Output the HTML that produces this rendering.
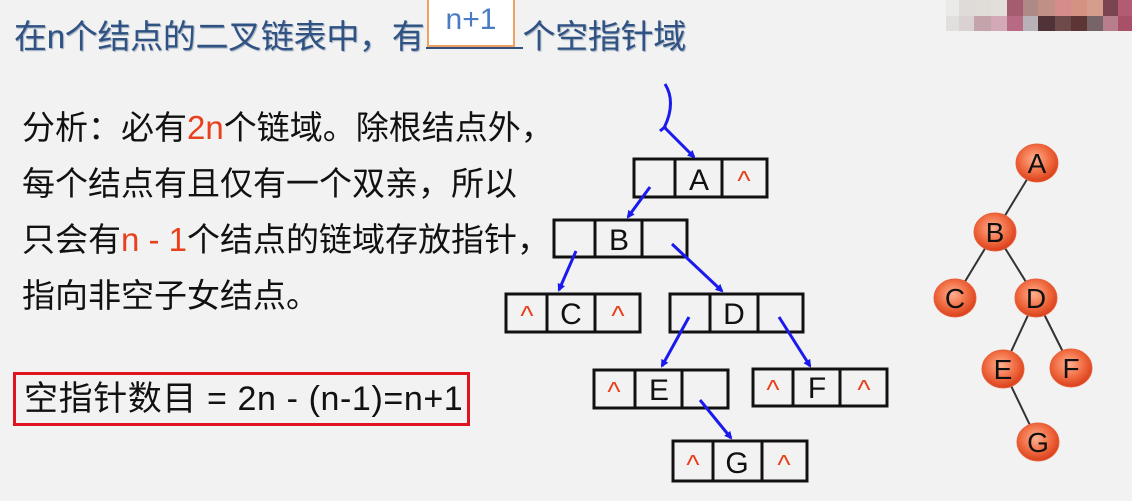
<!DOCTYPE html>
<html><head><meta charset="utf-8"><style>
body{margin:0;width:1132px;height:501px;background:#f2f2f2;overflow:hidden;position:relative;font-family:"Liberation Sans","Noto Sans CJK SC",sans-serif}
.t{position:absolute;white-space:nowrap}
.r{color:#e8401c}
.m{position:absolute;width:16px;height:16px}
</style></head><body>
<div class="t" style="left:14px;top:13px;font-size:33px;line-height:48px;color:#2f5283;text-shadow:1px 1px 1px #9aa8bb;letter-spacing:-0.3px">在n个结点的二叉链表中，有<span style="display:inline-block;width:98px"></span>个空指针域</div>
<div style="position:absolute;left:426px;top:47px;width:97px;height:2px;background:#2f5283"></div>
<div class="t" style="left:427px;top:-2px;width:84px;height:45px;border:2px solid #f0a060;background:#fff;color:#4a7cc4;font-size:30px;text-align:center;line-height:40px">n+1</div>
<div class="t" style="left:22px;top:100px;font-size:33px;line-height:56px;color:#111">分析：必有<span class="r">2n</span>个链域。除根结点外，<br>每个结点有且仅有一个双亲，所以<br>只会有<span class="r">n - 1</span>个结点的链域存放指针，<br>指向非空子女结点。</div>
<div class="t" style="left:13px;top:372px;width:457px;height:54px;border:3px solid #e0141e;font-size:34px;line-height:48px;color:#111;padding-left:8px;box-sizing:border-box;letter-spacing:0.6px">空指针数目 = 2n - (n-1)=n+1</div>

<div class="m" style="left:946px;top:0;background:#eaeae8;width:13px"></div><div class="m" style="left:959px;top:0;background:#dedbd8"></div><div class="m" style="left:974px;top:0;background:#e0ddd9;width:17px"></div><div class="m" style="left:991px;top:0;background:#e2dfdb"></div><div class="m" style="left:1007px;top:0;background:#a45c6e"></div><div class="m" style="left:1023px;top:0;background:#ae8a87"></div><div class="m" style="left:1038px;top:0;background:#c08f86;width:17px"></div><div class="m" style="left:1055px;top:0;background:#d68c8a"></div><div class="m" style="left:1071px;top:0;background:#d49282"></div><div class="m" style="left:1087px;top:0;background:#d69c8c"></div><div class="m" style="left:1103px;top:0;background:#7a4551;width:15px"></div><div class="m" style="left:1118px;top:0;background:#b35b73;width:14px"></div>
<div class="m" style="left:946px;top:16px;background:#e0dfdd;width:13px;height:15px"></div><div class="m" style="left:959px;top:16px;background:#dad2d2;height:15px"></div><div class="m" style="left:974px;top:16px;background:#c3a4aa;width:17px;height:15px"></div><div class="m" style="left:991px;top:16px;background:#d4a9b7;height:15px"></div><div class="m" style="left:1007px;top:16px;background:#b86a84;height:15px"></div><div class="m" style="left:1023px;top:16px;background:#b9b1b8;height:15px"></div><div class="m" style="left:1038px;top:16px;background:#503337;width:17px;height:15px"></div><div class="m" style="left:1055px;top:16px;background:#6f4a4a;height:15px"></div><div class="m" style="left:1071px;top:16px;background:#5e3535;height:15px"></div><div class="m" style="left:1087px;top:16px;background:#766468;height:15px"></div><div class="m" style="left:1103px;top:16px;background:#b87e8c;width:15px;height:15px"></div><div class="m" style="left:1118px;top:16px;background:#a85068;width:14px;height:15px"></div>

<svg width="1132" height="501" style="position:absolute;left:0;top:0" font-family="Liberation Sans, sans-serif">
<defs>
<marker id="ah" markerWidth="8" markerHeight="8" refX="6" refY="4" orient="auto" markerUnits="userSpaceOnUse"><path d="M0,0 L8,4 L0,8 z" fill="#1a1aee"/></marker>
<radialGradient id="og" cx="45%" cy="40%" r="60%"><stop offset="0" stop-color="#ffb090"/><stop offset="0.6" stop-color="#f06a40"/><stop offset="1" stop-color="#d8401c"/></radialGradient>
</defs>
<g fill="none" stroke="#111" stroke-width="3">
<rect x="634" y="159" width="133" height="38"/><line x1="675" y1="159" x2="675" y2="197"/><line x1="722" y1="159" x2="722" y2="197"/>
<rect x="554" y="220" width="133" height="37"/><line x1="595" y1="220" x2="595" y2="257"/><line x1="642" y1="220" x2="642" y2="257"/>
<rect x="506" y="294" width="134" height="38"/><line x1="547" y1="294" x2="547" y2="332"/><line x1="595" y1="294" x2="595" y2="332"/>
<rect x="670" y="294" width="133" height="38"/><line x1="710" y1="294" x2="710" y2="332"/><line x1="758" y1="294" x2="758" y2="332"/>
<rect x="594" y="370" width="134" height="38"/><line x1="635" y1="370" x2="635" y2="408"/><line x1="682" y1="370" x2="682" y2="408"/>
<rect x="753" y="369" width="134" height="37"/><line x1="793" y1="369" x2="793" y2="406"/><line x1="840" y1="369" x2="840" y2="406"/>
<rect x="673" y="441" width="134" height="40"/><line x1="713" y1="441" x2="713" y2="481"/><line x1="762" y1="441" x2="762" y2="481"/>
</g>
<g font-size="30" fill="#111" text-anchor="middle">
<text x="699" y="190">A</text><text x="619" y="250">B</text><text x="571" y="324">C</text><text x="734" y="324">D</text><text x="659" y="400">E</text><text x="817" y="398">F</text><text x="737" y="473">G</text>
</g>
<g font-size="28" fill="#e8401c" text-anchor="middle">
<text x="744" y="190">^</text><text x="527" y="325">^</text><text x="618" y="325">^</text><text x="614" y="401">^</text><text x="773" y="399">^</text><text x="864" y="399">^</text><text x="693" y="474">^</text><text x="784" y="474">^</text>
</g>
<g stroke="#1a1aee" stroke-width="3" fill="none" marker-end="url(#ah)">
<path d="M665,84 C672,95 673,110 664,128" marker-end="none"/>
<path d="M660,131 L666,126" marker-end="none"/>
<line x1="665" y1="128" x2="694" y2="157"/>
<line x1="650" y1="187" x2="628" y2="217"/>
<line x1="576" y1="251" x2="559" y2="290"/>
<line x1="672" y1="244" x2="722" y2="291"/>
<line x1="689" y1="317" x2="662" y2="366"/>
<line x1="779" y1="317" x2="810" y2="366"/>
<line x1="700" y1="400" x2="731" y2="438"/>
</g>
<g stroke="#333" stroke-width="2">
<line x1="1037" y1="163" x2="995" y2="232"/><line x1="995" y1="232" x2="955" y2="298"/><line x1="995" y1="232" x2="1036" y2="298"/>
<line x1="1036" y1="298" x2="1003" y2="369"/><line x1="1036" y1="298" x2="1071" y2="368"/><line x1="1003" y1="369" x2="1038" y2="442"/>
</g>
<g fill="url(#og)" stroke="#e8603a" stroke-width="1">
<ellipse cx="1037" cy="163" rx="21" ry="19"/><ellipse cx="995" cy="232" rx="21" ry="19"/><ellipse cx="955" cy="298" rx="21" ry="19"/><ellipse cx="1036" cy="298" rx="21" ry="19"/><ellipse cx="1003" cy="369" rx="21" ry="19"/><ellipse cx="1071" cy="368" rx="21" ry="19"/><ellipse cx="1038" cy="442" rx="21" ry="19"/>
</g>
<g font-size="28" fill="#111" text-anchor="middle">
<text x="1037" y="173">A</text><text x="995" y="242">B</text><text x="955" y="308">C</text><text x="1036" y="308">D</text><text x="1003" y="379">E</text><text x="1071" y="378">F</text><text x="1038" y="452">G</text>
</g>
</svg>
</body></html>
